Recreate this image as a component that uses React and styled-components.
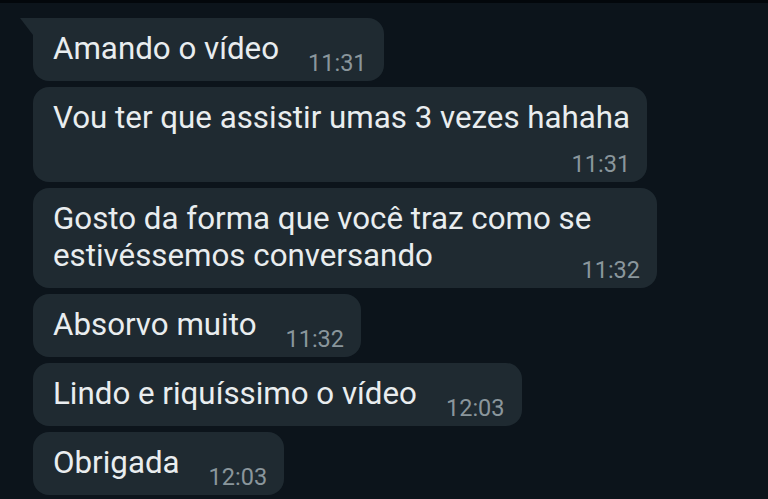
import styled, { createGlobalStyle } from 'styled-components';

const GlobalStyle = createGlobalStyle`
  html, body {
    margin: 0;
    padding: 0;
    background: #0c141b;
  }
  body {
    font-family: Roboto, "Noto Sans", sans-serif;
  }
`;

const Screen = styled.div`
  width: 768px;
  height: 499px;
  overflow: hidden;
  background: #0c141b;
  border-top: 3px solid #03070b;
  box-sizing: border-box;
`;

const Thread = styled.div`
  display: flex;
  flex-direction: column;
  align-items: flex-start;
  gap: 6px;
  padding: 15px 0 0 33px;
`;

// layout: "inline" = time beside text, "stacked" = time on its own row,
// "wrapped" = multi-line text with time tucked under the last line
const Bubble = styled.div`
  position: relative;
  display: flex;
  flex-direction: ${({ $layout }) => ($layout === 'inline' ? 'row' : 'column')};
  align-items: flex-end;
  gap: ${({ $layout }) => ($layout === 'stacked' ? '17px' : '0')};
  min-width: ${({ $minWidth }) => ($minWidth ? `${$minWidth}px` : '0')};
  box-sizing: border-box;
  background: #1f2a31;
  border-radius: ${({ $first }) => ($first ? '0 16px 16px 16px' : '16px')};
  padding: 12px 17px 12px 20px;

  ${({ $first }) =>
    $first &&
    `
    &::before {
      content: '';
      position: absolute;
      left: -13px;
      top: 0;
      width: 0;
      height: 0;
      border-top: 17px solid #1f2a31;
      border-left: 13px solid transparent;
    }
  `}
`;

const Text = styled.div`
  align-self: flex-start;
  color: #e9edef;
  font-size: 31.3px;
  line-height: 37px;
  margin-bottom: ${({ $layout }) => ($layout === 'inline' ? '2px' : '0')};
`;

const Time = styled.span`
  color: #8a969c;
  font-size: 23.5px;
  line-height: 22px;
  margin-bottom: -5px;
  margin-top: ${({ $layout }) => ($layout === 'wrapped' ? '-15px' : '0')};
  margin-left: ${({ $layout }) => ($layout === 'inline' ? '29px' : '0')};
  flex-shrink: 0;
`;

const messages = [
  { text: ['Amando o vídeo'], time: '11:31', first: true },
  { text: ['Vou ter que assistir umas 3 vezes hahaha'], time: '11:31', layout: 'stacked' },
  {
    text: ['Gosto da forma que você traz como se', 'estivéssemos conversando'],
    time: '11:32',
    layout: 'wrapped',
    minWidth: 624,
  },
  { text: ['Absorvo muito'], time: '11:32' },
  { text: ['Lindo e riquíssimo o vídeo'], time: '12:03' },
  { text: ['Obrigada'], time: '12:03' },
];

export default function App() {
  return (
    <Screen>
      <GlobalStyle />
      <Thread>
        {messages.map((m, i) => {
          const layout = m.layout || 'inline';
          return (
            <Bubble key={i} $first={m.first} $layout={layout} $minWidth={m.minWidth}>
              <Text $layout={layout}>
                {m.text.map((line, j) => (
                  <div key={j}>{line}</div>
                ))}
              </Text>
              <Time $layout={layout}>{m.time}</Time>
            </Bubble>
          );
        })}
      </Thread>
    </Screen>
  );
}
